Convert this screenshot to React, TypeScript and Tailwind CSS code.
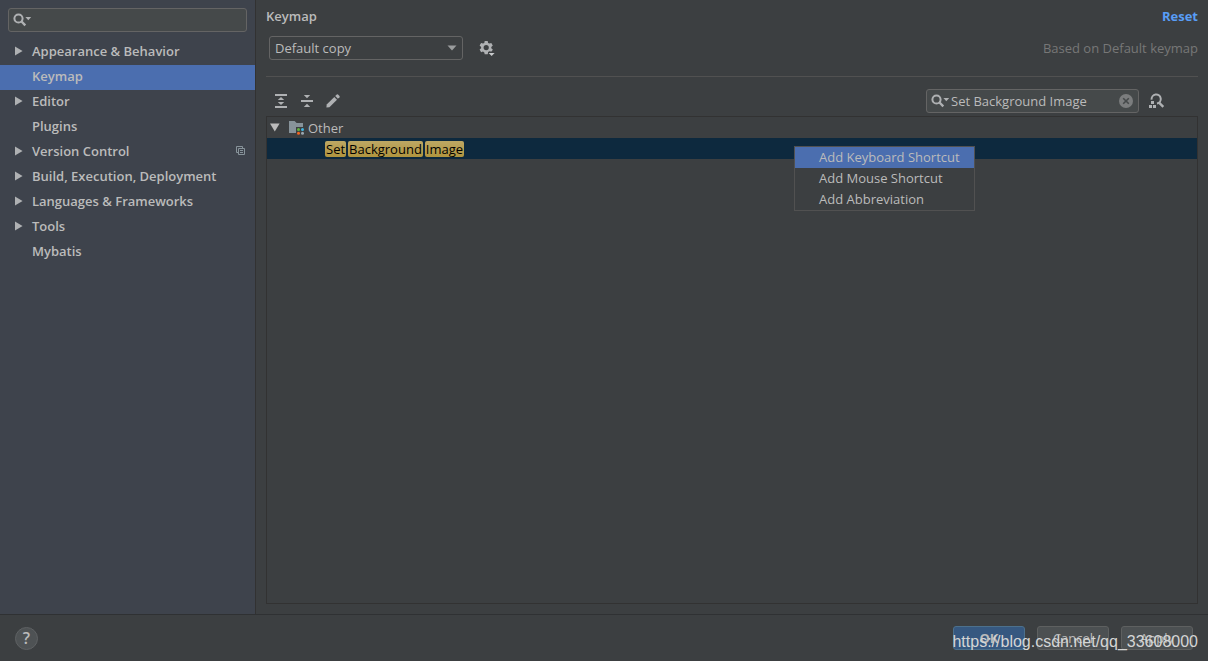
import React from "react";

type Category = { label: string; expandable: boolean; selected?: boolean; projectLevel?: boolean };

const categories: Category[] = [
  { label: "Appearance & Behavior", expandable: true },
  { label: "Keymap", expandable: false, selected: true },
  { label: "Editor", expandable: true },
  { label: "Plugins", expandable: false },
  { label: "Version Control", expandable: true, projectLevel: true },
  { label: "Build, Execution, Deployment", expandable: true },
  { label: "Languages & Frameworks", expandable: true },
  { label: "Tools", expandable: true },
  { label: "Mybatis", expandable: false },
];

const menuItems = ["Add Keyboard Shortcut", "Add Mouse Shortcut", "Add Abbreviation"];
const matchedWords = ["Set", "Background", "Image"];

function SearchIcon() {
  return (
    <svg width="19" height="14" viewBox="0 0 19 14" fill="none" aria-hidden="true">
      <circle cx="5.5" cy="5.5" r="4.1" stroke="#afb1b3" strokeWidth="2" />
      <path d="M8.5 8.5L12.3 12.3" stroke="#afb1b3" strokeWidth="2.4" />
      <path d="M12.4 4H18.2L15.3 7.2Z" fill="#afb1b3" />
    </svg>
  );
}

function ProjectLevelIcon() {
  return (
    <svg width="10" height="10" viewBox="0 0 10 10" fill="none" stroke="#87939a" aria-hidden="true">
      <path d="M2 6.5H0.5V0.5H6.5V2" />
      <path d="M2.5 2.5H8.5V8.5H2.5Z" />
      <path d="M4 4.5H7M4 6.5H7" />
    </svg>
  );
}

function GearIcon() {
  return (
    <svg width="18" height="18" viewBox="0 0 18 18" aria-hidden="true">
      <path
        fill="#afb1b3"
        fillRule="evenodd"
        d="M5.7 1H8.7L9.1 2.9L10.4 3.6L12.3 3L13.8 5.6L12.3 6.9V8.3L13.8 9.6L12.3 12.2L10.4 11.6L9.1 12.4L8.7 14.2H5.7L5.3 12.4L4 11.6L2.1 12.2L0.6 9.6L2.1 8.3V6.9L0.6 5.6L2.1 3L4 3.6L5.3 2.9ZM7.2 5A2.6 2.6 0 1 0 7.2 10.2A2.6 2.6 0 1 0 7.2 5Z"
      />
      <path fill="#3c3f41" d="M9 12L10.2 11.6H17V17H12L9 13.8Z" />
      <path fill="#c8cacc" d="M9.6 13H15.6L12.6 16Z" />
    </svg>
  );
}

function ExpandAllIcon() {
  return (
    <svg width="14" height="14" viewBox="0 0 14 14" fill="#afb1b3" aria-hidden="true">
      <path d="M1 0H13V2H1ZM1 12H13V14H1ZM7 3L10.2 6H3.8ZM7 11L10.2 8H3.8Z" />
    </svg>
  );
}

function CollapseAllIcon() {
  return (
    <svg width="14" height="14" viewBox="0 0 14 14" fill="#afb1b3" aria-hidden="true">
      <path d="M1 6H13V8H1ZM3.8 1H10.2L7 4.3ZM3.8 13H10.2L7 9.7Z" />
    </svg>
  );
}

function PencilIcon() {
  return (
    <svg width="14" height="14" viewBox="0 0 14 14" fill="#afb1b3" aria-hidden="true">
      <path d="M8.3 3L11 5.7L3.4 13.3L0.4 13.6L0.7 10.6Z" />
      <path d="M9.2 2.1L10.8 0.5Q11.4 0 12 0.5L13.5 2Q14 2.6 13.5 3.2L11.9 4.8Z" />
    </svg>
  );
}

function FolderIcon() {
  return (
    <svg width="16" height="14" viewBox="0 0 16 14" aria-hidden="true">
      <path fill="#87939a" d="M0 0H5.6L7.6 2H14V6H7V12H0Z" />
      <circle cx="9.5" cy="8.5" r="1.5" fill="#62b543" />
      <circle cx="13.5" cy="8.5" r="1.5" fill="#40b6e0" />
      <circle cx="9.5" cy="12.3" r="1.5" fill="#f26522" />
      <circle cx="13.5" cy="12.3" r="1.5" fill="#9aa7b0" />
    </svg>
  );
}

function ClearIcon() {
  return (
    <svg width="14" height="14" viewBox="0 0 14 14" aria-hidden="true">
      <circle cx="7" cy="7" r="7" fill="#7b7d7e" />
      <path d="M4.2 4.2L9.8 9.8M9.8 4.2L4.2 9.8" stroke="#45494a" strokeWidth="1.6" />
    </svg>
  );
}

function FindByShortcutIcon() {
  return (
    <svg width="16" height="16" viewBox="0 0 16 16" fill="none" aria-hidden="true">
      <path d="M2.6 6.6A4.6 4.6 0 1 1 8 10.6" stroke="#afb1b3" strokeWidth="2" />
      <path d="M10 9.6L14.3 13.9" stroke="#afb1b3" strokeWidth="2.4" />
      <path fill="#afb1b3" d="M2 8H5V11H2ZM0 12H3V15H0ZM4 12H7V15H4Z" />
    </svg>
  );
}

export default function App() {
  return (
    <div className="relative flex min-h-screen flex-col bg-[#3c3f41] font-['Open_Sans','Noto_Sans',sans-serif] text-[13px] leading-5 text-[#bbbbbb]">
      <div className="flex flex-1">
        <aside className="flex w-64 shrink-0 flex-col border-r border-[#323232] bg-[#3e434c]">
          <label className="mx-2 mt-2 flex h-6 items-center rounded-[3px] border border-[#646464] bg-[#45494a] pl-1">
            <SearchIcon />
            <input
              type="text"
              aria-label="Search settings"
              className="min-w-0 flex-1 bg-transparent px-1 outline-none"
            />
          </label>
          <nav aria-label="Settings categories" className="mt-2 flex flex-col">
            {categories.map((c) => (
              <button
                key={c.label}
                type="button"
                aria-current={c.selected ? "page" : undefined}
                className={`flex h-[25px] items-center pr-[9px] pb-[3px] pl-[15px] text-left font-semibold ${
                  c.selected ? "bg-[#4b6eaf]" : ""
                }`}
              >
                <span className="w-[17px] shrink-0">
                  {c.expandable && (
                    <svg width="8" height="10" viewBox="0 0 8 10" fill="#afb1b3" aria-hidden="true">
                      <path d="M0 0.5L7.6 5L0 9.5Z" />
                    </svg>
                  )}
                </span>
                <span className="flex-1 whitespace-nowrap">{c.label}</span>
                {c.projectLevel && <ProjectLevelIcon />}
              </button>
            ))}
          </nav>
        </aside>

        <main className="flex min-w-0 flex-1 flex-col px-2.5 pt-1.5 pb-2.5">
          <header className="flex items-center justify-between font-semibold">
            <h1>Keymap</h1>
            <a href="#reset" className="font-bold text-[#589df6]">
              Reset
            </a>
          </header>

          <div className="mt-2.5 flex items-center pl-[3px]">
            <div className="grid w-[194px] items-center">
              <select
                aria-label="Keymap scheme"
                className="col-start-1 row-start-1 h-6 appearance-none rounded-[3px] border border-[#646464] bg-[#3c3f41] pb-px pl-[5px] outline-none"
              >
                <option>Default copy</option>
              </select>
              <svg
                className="pointer-events-none col-start-1 row-start-1 mr-1.5 justify-self-end"
                width="10"
                height="6"
                viewBox="0 0 10 6"
                fill="#9a9c9d"
                aria-hidden="true"
              >
                <path d="M0.5 0.5H9.5L5 5.5Z" />
              </svg>
            </div>
            <button type="button" aria-label="Scheme actions" className="ml-4 pt-0.5">
              <GearIcon />
            </button>
            <span className="ml-auto text-[#777777]">Based on Default keymap</span>
          </div>

          <hr className="mt-4 border-[#515151]" />

          <div className="mt-3 flex h-6 items-center pr-[33px] pl-2">
            <div className="flex items-center gap-3">
              <button type="button" aria-label="Expand all">
                <ExpandAllIcon />
              </button>
              <button type="button" aria-label="Collapse all">
                <CollapseAllIcon />
              </button>
              <button type="button" aria-label="Edit shortcut">
                <PencilIcon />
              </button>
            </div>
            <label className="ml-auto flex h-6 w-[213px] items-center rounded-[3px] border border-[#646464] bg-[#45494a] pr-[5px] pl-1">
              <SearchIcon />
              <input
                type="text"
                aria-label="Search actions"
                defaultValue="Set Background Image"
                className="min-w-0 flex-1 bg-transparent pb-px pl-px outline-none"
              />
              <button type="button" aria-label="Clear search">
                <ClearIcon />
              </button>
            </label>
            <button type="button" aria-label="Find actions by shortcut" className="ml-2.5">
              <FindByShortcutIcon />
            </button>
          </div>

          <div className="relative mt-[3px] flex-1 border border-[#323232]">
            <ul role="tree" aria-label="Keymap actions">
              <li role="treeitem" aria-expanded="true" className="flex h-[21px] items-center pl-[3px]">
                <svg width="10" height="9" viewBox="0 0 10 9" fill="#bbbbbb" aria-hidden="true">
                  <path d="M0 0.5H9.6L4.8 8.5Z" />
                </svg>
                <span className="mr-[3px] ml-[9px]">
                  <FolderIcon />
                </span>
                Other
              </li>
              <li
                role="treeitem"
                aria-selected="true"
                className="flex h-[21px] items-center gap-0.5 bg-[#0d293e] pl-[58px]"
              >
                {matchedWords.map((w) => (
                  <mark
                    key={w}
                    className="rounded-xs bg-linear-to-b from-[#bda763] to-[#b0953e] px-px leading-4 text-black"
                  >
                    {w}
                  </mark>
                ))}
              </li>
            </ul>
            <div
              role="menu"
              className="absolute top-[29px] left-[527px] flex w-[181px] flex-col border border-[#515151] bg-[#3c3f41]"
            >
              {menuItems.map((m, i) => (
                <button
                  key={m}
                  type="button"
                  role="menuitem"
                  className={`h-[21px] pb-px pl-6 text-left whitespace-nowrap ${i === 0 ? "bg-[#4b6eaf]" : ""}`}
                >
                  {m}
                </button>
              ))}
            </div>
          </div>
        </main>
      </div>

      <footer className="flex h-[47px] items-center justify-between border-t border-[#2f3133] pr-[15px] pl-[15px]">
        <button
          type="button"
          aria-label="Help"
          className="h-[23px] w-[23px] rounded-full border border-[#5e6163] bg-[#4e5254] text-base leading-5 font-semibold"
        >
          ?
        </button>
        <div className="flex gap-3">
          <button
            type="button"
            className="h-6 w-[72px] rounded-[3px] border border-[#4c708c] bg-[#365880] font-bold"
          >
            OK
          </button>
          <button type="button" className="h-6 w-[72px] rounded-[3px] border border-[#5e6060] bg-[#4c5052]">
            Cancel
          </button>
          <button type="button" className="h-6 w-[72px] rounded-[3px] border border-[#5e6060] bg-[#4c5052]">
            Apply
          </button>
        </div>
      </footer>

      <span className="pointer-events-none absolute right-2.5 bottom-[9px] font-['Liberation_Sans',sans-serif] text-base leading-5 text-[#d4d5d5]">
        https://blog.csdn.net/qq_33608000
      </span>
    </div>
  );
}
